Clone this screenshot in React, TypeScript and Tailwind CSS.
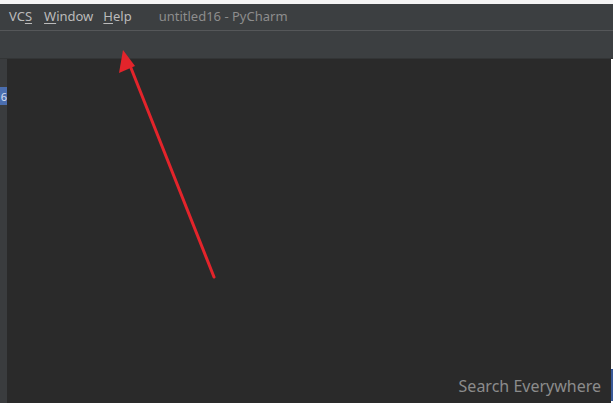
export default function App() {
  return (
    <div
      className="flex h-[403px] w-[613px] flex-col overflow-hidden bg-white"
      style={{ fontFamily: '"Noto Sans", "Open Sans", sans-serif' }}
    >
      <div className="h-[4px] shrink-0 bg-[#f4f4f4]" />
      {/* menu bar */}
      <div className="flex h-[26px] shrink-0 items-center bg-[#3c3f41] pl-[9px] text-[13px] text-[#bbbbbb]">
        <span>
          VC<span className="underline underline-offset-2">S</span>
        </span>
        <span className="ml-[12px]">
          <span className="underline underline-offset-2">W</span>indow
        </span>
        <span className="ml-[10px]">
          <span className="underline underline-offset-2">H</span>elp
        </span>
        <span className="ml-[27px] text-[#8d8d8d]">untitled16 - PyCharm</span>
      </div>
      <div className="h-px shrink-0 bg-[#555759]" />
      {/* toolbar */}
      <div className="h-[28px] shrink-0 border-b border-[#333536] bg-[#3c3f41]" />
      {/* body */}
      <div className="relative flex flex-1">
        <div className="w-[7px] shrink-0 bg-[#3a3c3e] pt-[28px]">
          <div className="flex h-[18px] items-center justify-end bg-[#4b6eaf] text-[11px] leading-none text-[#d7dfee]">
            6
          </div>
        </div>
        <div className="flex flex-1 items-end justify-end bg-[#2a2a2a] pb-[5px] pr-[10px]">
          <span className="text-[16px] text-[#8c8c8c]">Search Everywhere</span>
        </div>
        <div className="mt-[310px] h-[32px] w-[2px] shrink-0 bg-[#3a5a99]" />
        <svg className="absolute left-0 top-[-60px]" width="613" height="403" viewBox="0 0 613 403">
          <line x1="214" y1="278" x2="129" y2="64" stroke="#e3242b" strokeWidth="3" strokeLinecap="round" />
          <polygon points="123,51 119,74 135,67" fill="#e3242b" />
        </svg>
      </div>
    </div>
  )
}
